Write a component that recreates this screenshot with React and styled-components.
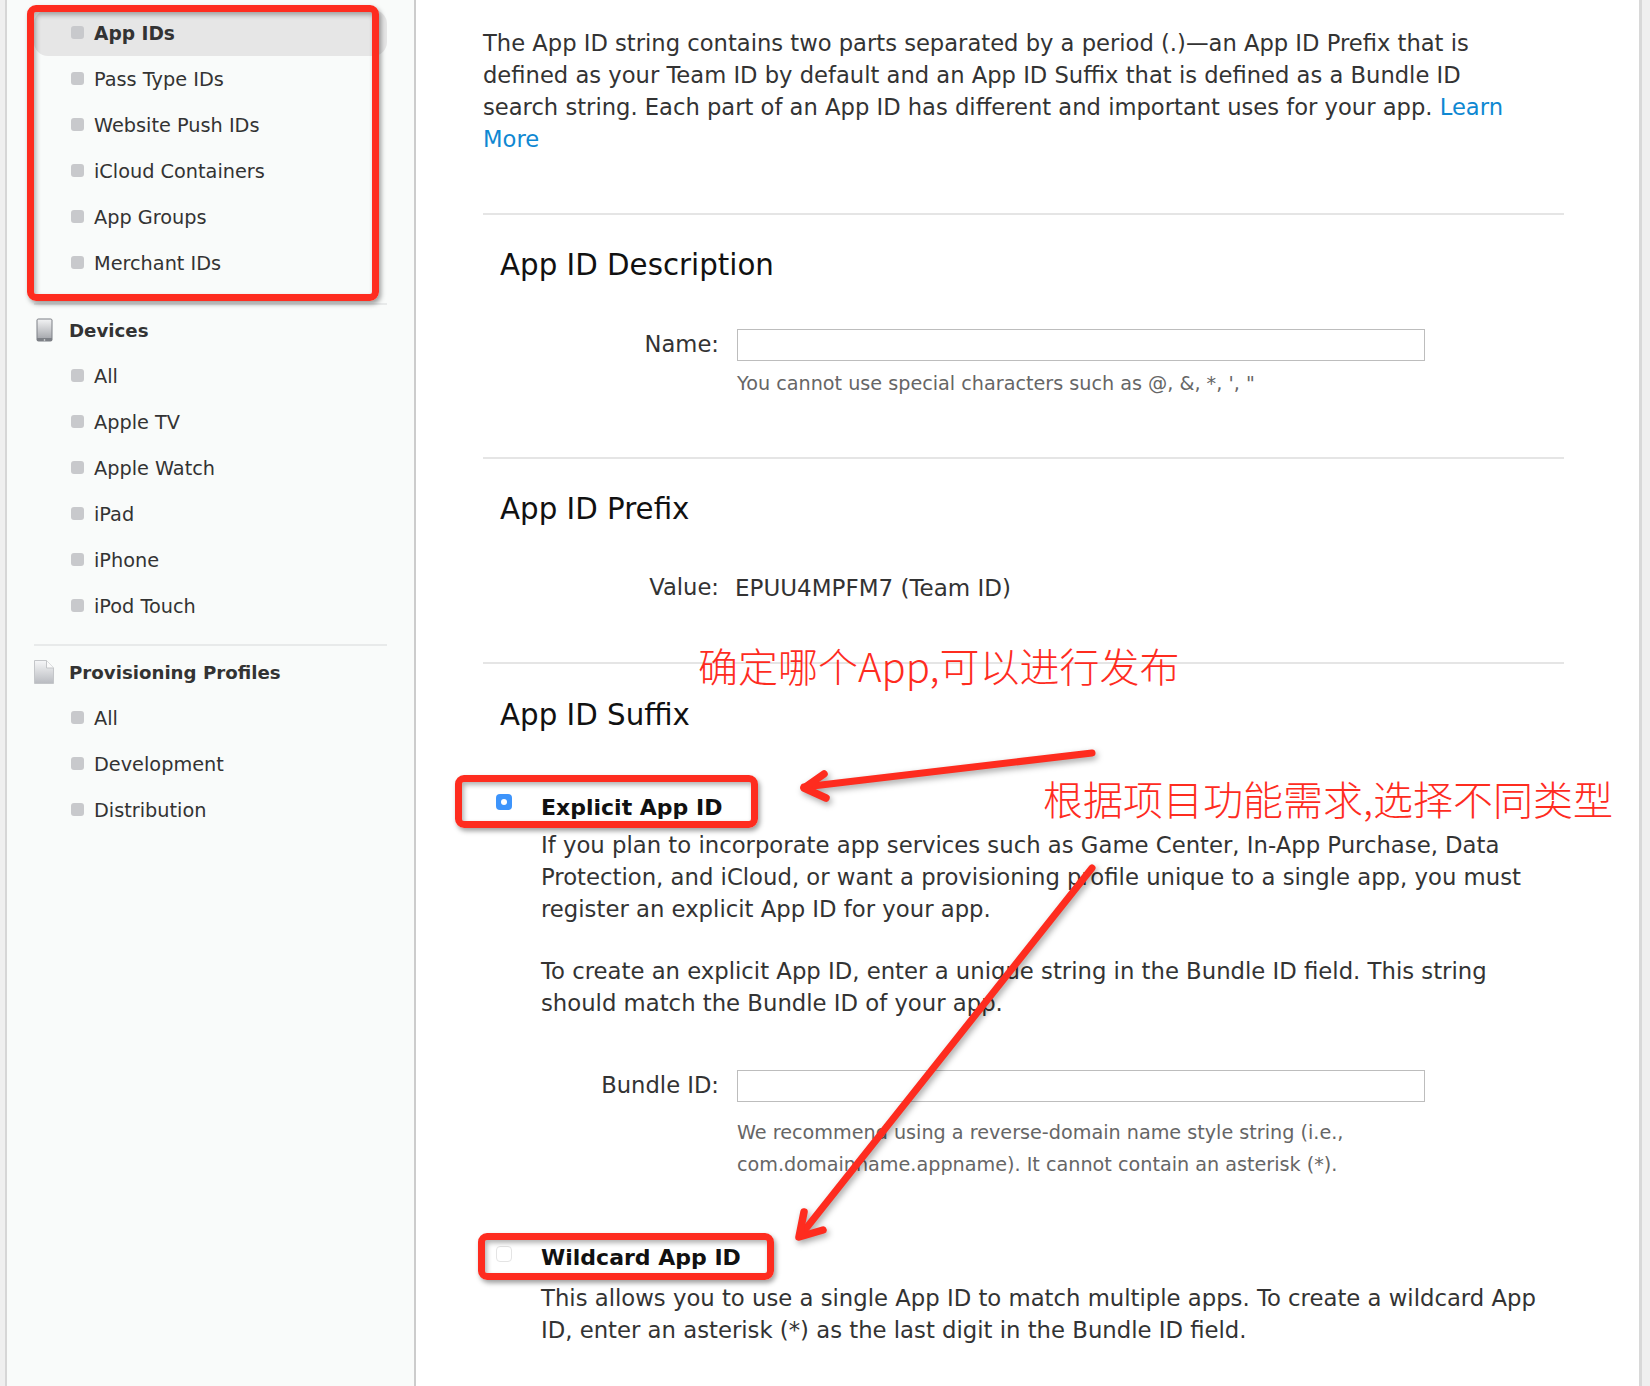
import React from "react";
import styled, { createGlobalStyle } from "styled-components";

const Global = createGlobalStyle`
  html, body { margin: 0; padding: 0; background: #efefef; overflow: hidden; }
  body { font-family: "DejaVu Sans", "Noto Sans CJK SC", sans-serif; color: #333; }
`;

const Shell = styled.div`
  position: relative;
  display: flex;
  width: 1650px;
  height: 1386px;
  overflow: hidden;
  box-sizing: border-box;
  padding: 0 8px 0 5px;
  background: #efefef;
`;

const Sidebar = styled.aside`
  width: 411px;
  flex: none;
  box-sizing: border-box;
  padding: 10px 27px 0 27px;
  background: #f9fbfa;
  border-left: 2px solid #d6d6d6;
  border-right: 2px solid #cccccc;
`;

const NavItem = styled.div`
  display: flex;
  align-items: center;
  gap: 10px;
  height: 46px;
  box-sizing: border-box;
  padding-left: 37px;
  font-size: ${(p) => (p.$active ? "18.6px" : "19.3px")};
  font-weight: ${(p) => (p.$active ? 700 : 400)};
  color: #333;
  border-radius: 14px;
  background: ${(p) => (p.$active ? "#e6e6e6" : "transparent")};
`;

const Bullet = styled.span`
  width: 13px;
  height: 13px;
  flex: none;
  border-radius: 3px;
  background: #c8c9cc;
  position: relative;
  top: -1px;
`;

const NavDivider = styled.div`
  height: 2px;
  margin: ${(p) => p.$m};
  background: #e8eaea;
`;

const NavHead = styled.div`
  display: flex;
  align-items: center;
  height: 46px;
  font-size: 18.2px;
  font-weight: 700;
  color: #333;
`;

const NavIcon = styled.span`
  display: flex;
  justify-content: center;
  width: 20px;
  margin-right: 15px;
`;

const Main = styled.main`
  flex: 1;
  min-width: 0;
  box-sizing: border-box;
  padding: 27px 75px 0 67px;
  background: #fff;
  border-right: 3px solid #d8d8d8;
`;

const Para = styled.p`
  margin: ${(p) => p.$m || 0};
  font-size: 22.65px;
  line-height: 32px;
  color: #333;
  white-space: nowrap;
`;

const Link = styled.a`
  color: #0f88d2;
  text-decoration: none;
`;

const Rule = styled.hr`
  height: 2px;
  margin: ${(p) => p.$m || 0};
  border: 0;
  background: #e5e5e5;
`;

const Title = styled.h2`
  margin: ${(p) => p.$m || 0};
  padding-left: 17px;
  font-size: 29.3px;
  line-height: 40px;
  font-weight: 400;
  color: #111;
`;

const FormRow = styled.div`
  display: flex;
  align-items: center;
  margin: ${(p) => p.$m || 0};
  padding-left: 17px;
  font-size: 22.65px;
  line-height: 32px;
`;

const Label = styled.label`
  width: 219px;
  flex: none;
  text-align: right;
  color: #333;
  position: relative;
  top: -1px;
`;

const Field = styled.div`
  width: 688px;
  height: 32px;
  box-sizing: border-box;
  margin-left: 18px;
  background: #fff;
  border: 1px solid #bdbdbd;
`;

const Value = styled.span`
  margin-left: 16px;
  color: #333;
  font-size: 23px;
`;

const Hint = styled.p`
  margin: ${(p) => p.$m || 0};
  padding-left: 254px;
  font-size: 19.2px;
  line-height: 32px;
  color: #666;
  white-space: nowrap;
`;

const OptionHead = styled.div`
  display: flex;
  align-items: center;
  gap: 29px;
  height: 32px;
  margin: ${(p) => p.$m || 0};
  padding-left: 13px;
  font-size: 22px;
  font-weight: 700;
  color: #111;
`;

const Radio = styled.span`
  position: relative;
  top: ${(p) => (p.$on ? "-5px" : "-3px")};
  display: flex;
  align-items: center;
  justify-content: center;
  width: 16px;
  height: 16px;
  flex: none;
  box-sizing: border-box;
  border-radius: 4px;
  background: ${(p) => (p.$on ? "#3d94fb" : "#fff")};
  border: ${(p) => (p.$on ? "0" : "1px solid #e4e4e4")};
  &::after {
    content: "";
    display: ${(p) => (p.$on ? "block" : "none")};
    width: 6px;
    height: 6px;
    border-radius: 50%;
    background: #fff;
  }
`;

const OptionBody = styled.p`
  margin: ${(p) => p.$m || 0};
  padding-left: 58px;
  font-size: 22.75px;
  line-height: 32px;
  color: #333;
  white-space: nowrap;
`;

const RedBox = styled.div`
  position: absolute;
  left: ${(p) => p.$x}px;
  top: ${(p) => p.$y}px;
  width: ${(p) => p.$w}px;
  height: ${(p) => p.$h}px;
  box-sizing: border-box;
  border: 7px solid #fe2c1f;
  border-radius: 9px;
  box-shadow: 2px 3px 5px rgba(0, 0, 0, 0.38), inset 2px 3px 5px rgba(0, 0, 0, 0.3);
  pointer-events: none;
`;

const Note = styled.div`
  position: absolute;
  left: ${(p) => p.$x}px;
  top: ${(p) => p.$y}px;
  font-family: "Noto Sans CJK SC", sans-serif;
  font-size: 40px;
  line-height: 48px;
  font-weight: 300;
  color: #fe2c1f;
  white-space: nowrap;
`;

const ArrowLayer = styled.svg`
  position: absolute;
  left: 0;
  top: 0;
  pointer-events: none;
  filter: drop-shadow(2px 3px 3px rgba(0, 0, 0, 0.35));
`;

const groups = {
  top: ["App IDs", "Pass Type IDs", "Website Push IDs", "iCloud Containers", "App Groups", "Merchant IDs"],
  devices: ["All", "Apple TV", "Apple Watch", "iPad", "iPhone", "iPod Touch"],
  profiles: ["All", "Development", "Distribution"],
};

const Items = ({ list }) =>
  list.map((t) => (
    <NavItem key={t} $active={t === "App IDs"}>
      <Bullet />
      {t}
    </NavItem>
  ));

const DeviceIcon = () => (
  <svg width="17" height="24" viewBox="0 0 17 24">
    <defs>
      <linearGradient id="dev" x1="0" y1="0" x2="0" y2="1">
        <stop offset="0" stopColor="#f1f2f3" />
        <stop offset="1" stopColor="#a9abb0" />
      </linearGradient>
    </defs>
    <rect x="0.5" y="0.5" width="16" height="23" rx="2" fill="#7d8086" />
    <rect x="1.5" y="1.5" width="14" height="18.5" fill="url(#dev)" />
    <circle cx="8.5" cy="22" r="0.8" fill="#e8e8e8" />
  </svg>
);

const DocIcon = () => (
  <svg width="20" height="24" viewBox="0 0 20 24">
    <defs>
      <linearGradient id="doc" x1="0" y1="0" x2="0" y2="1">
        <stop offset="0" stopColor="#f6f7f8" />
        <stop offset="1" stopColor="#b9bbc0" />
      </linearGradient>
    </defs>
    <path d="M0.5 0.5H12.5L19.5 8V23.5H0.5Z" fill="url(#doc)" stroke="#c4c6c9" />
    <path d="M12.5 0.5V8H19.5" fill="#fafafa" stroke="#c4c6c9" />
  </svg>
);

export default function App() {
  return (
    <>
      <Global />
      <Shell>
        <Sidebar>
          <Items list={groups.top} />
          <NavDivider $m="17px 0 2px" />
          <NavHead>
            <NavIcon><DeviceIcon /></NavIcon>
            Devices
          </NavHead>
          <Items list={groups.devices} />
          <NavDivider $m="15px 0 3px" />
          <NavHead>
            <NavIcon><DocIcon /></NavIcon>
            Provisioning Profiles
          </NavHead>
          <Items list={groups.profiles} />
        </Sidebar>
        <Main>
          <Para>
            The App ID string contains two parts separated by a period (.)—an App ID Prefix that is<br />
            defined as your Team ID by default and an App ID Suffix that is defined as a Bundle ID<br />
            search string. Each part of an App ID has different and important uses for your app. <Link>Learn</Link><br />
            <Link>More</Link>
          </Para>
          <Rule $m="58px 0 0" />
          <Title $m="30px 0 0">App ID Description</Title>
          <FormRow $m="44px 0 0">
            <Label>Name:</Label>
            <Field />
          </FormRow>
          <Hint $m="7px 0 0">You cannot use special characters such as @, &amp;, *, ', "</Hint>
          <Rule $m="57px 0 0" />
          <Title $m="30px 0 0">App ID Prefix</Title>
          <FormRow $m="43px 0 0">
            <Label>Value:</Label>
            <Value>EPUU4MPFM7 (Team ID)</Value>
          </FormRow>
          <Rule $m="58px 0 0" />
          <Title $m="31px 0 0">App ID Suffix</Title>
          <OptionHead $m="56px 0 0">
            <Radio $on />
            Explicit App ID
          </OptionHead>
          <OptionBody $m="6px 0 0">
            If you plan to incorporate app services such as Game Center, In-App Purchase, Data<br />
            Protection, and iCloud, or want a provisioning profile unique to a single app, you must<br />
            register an explicit App ID for your app.
          </OptionBody>
          <OptionBody $m="30px 0 0">
            To create an explicit App ID, enter a unique string in the Bundle ID field. This string<br />
            should match the Bundle ID of your app.
          </OptionBody>
          <FormRow $m="51px 0 0">
            <Label>Bundle ID:</Label>
            <Field />
          </FormRow>
          <Hint $m="15px 0 0">
            We recommend using a reverse-domain name style string (i.e.,<br />
            com.domainname.appname). It cannot contain an asterisk (*).
          </Hint>
          <OptionHead $m="60px 0 0">
            <Radio />
            Wildcard App ID
          </OptionHead>
          <OptionBody $m="9px 0 0">
            This allows you to use a single App ID to match multiple apps. To create a wildcard App<br />
            ID, enter an asterisk (*) as the last digit in the Bundle ID field.
          </OptionBody>
        </Main>

        <ArrowLayer width="1650" height="1386" viewBox="0 0 1650 1386" fill="none" stroke="#fe2c1f" strokeLinecap="round" strokeLinejoin="round">
          <path d="M1092 753L804 787" strokeWidth="7" />
          <path d="M824 774L804 788L826 798" strokeWidth="7.5" />
          <path d="M1092 868L800 1236" strokeWidth="7" />
          <path d="M804 1212L799 1237L823 1230" strokeWidth="7.5" />
        </ArrowLayer>
        <RedBox $x={27} $y={5} $w={352} $h={296} />
        <RedBox $x={455} $y={775} $w={303} $h={53} />
        <RedBox $x={478} $y={1233} $w={296} $h={47} />
        <Note $x={698} $y={641}>确定哪个App,可以进行发布</Note>
        <Note $x={1043} $y={774}>根据项目功能需求,选择不同类型</Note>
      </Shell>
    </>
  );
}
